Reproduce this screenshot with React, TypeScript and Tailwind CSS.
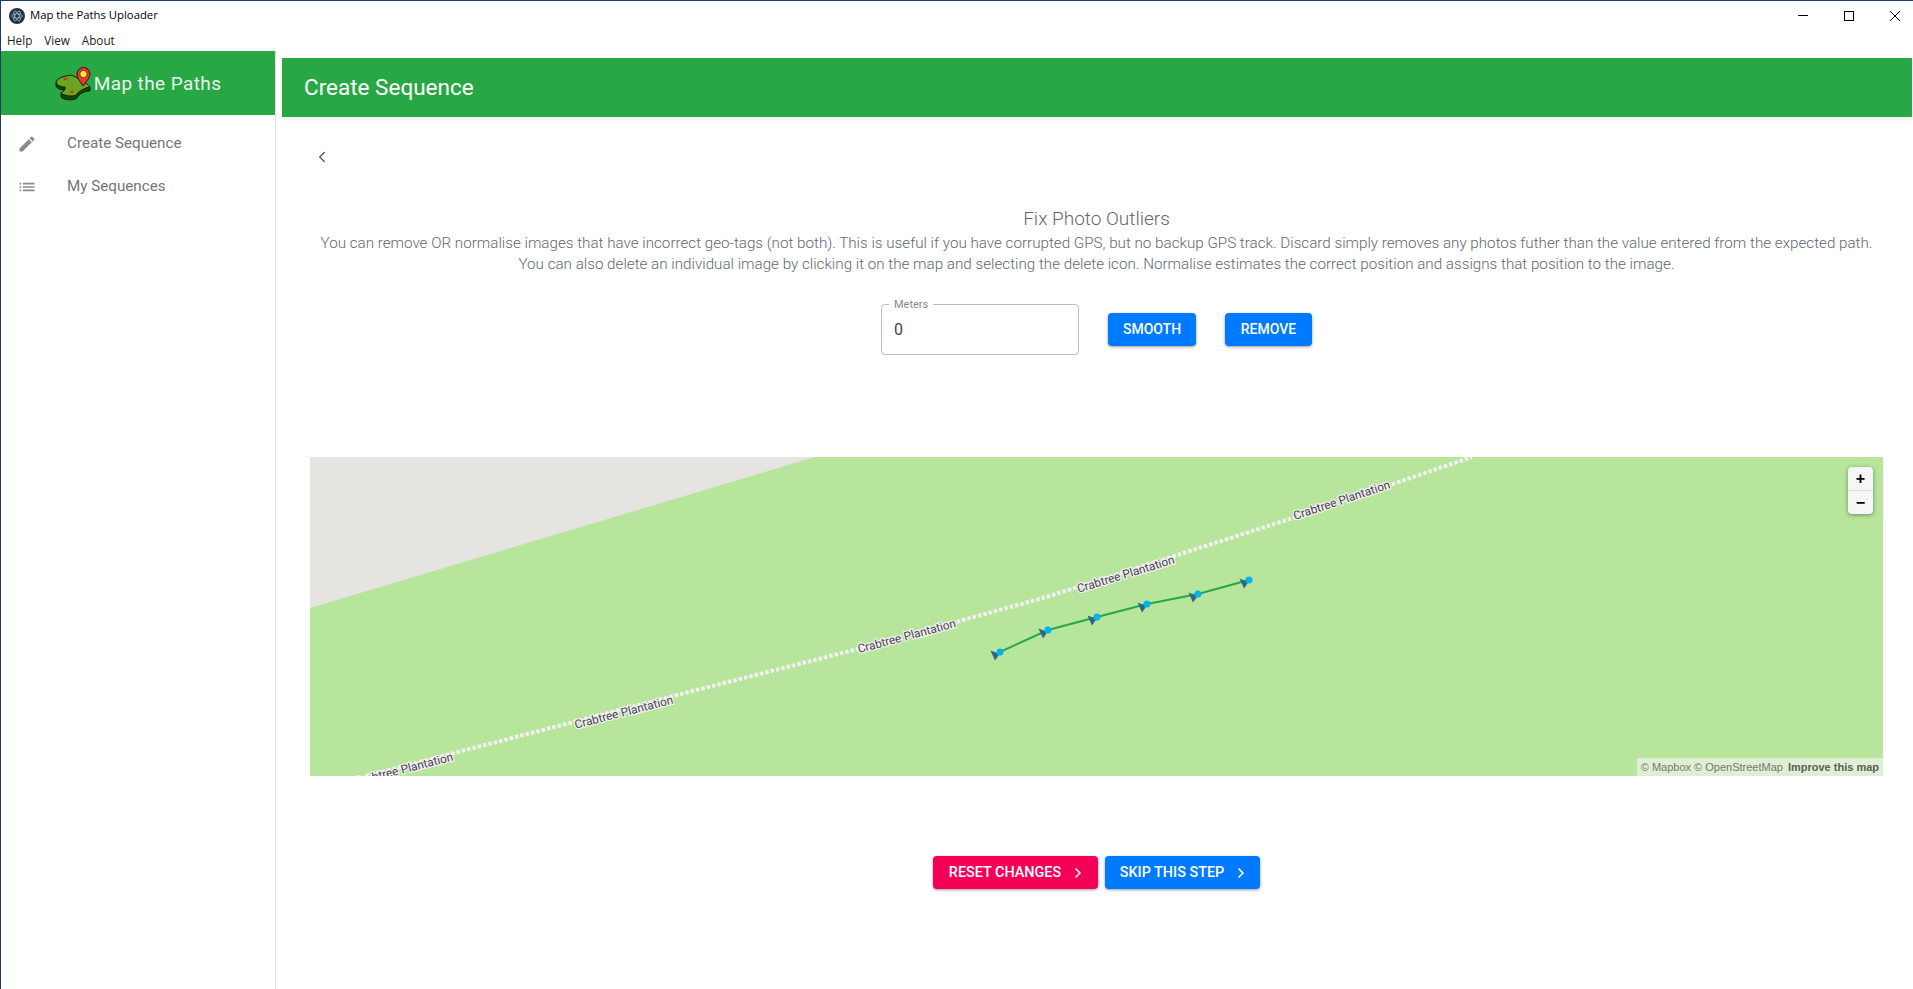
import React from "react";
import { ChevronLeft, ChevronRight } from "lucide-react";

const markers = [
  [995, 655],
  [1043, 633],
  [1092, 620],
  [1142, 607],
  [1193, 597],
  [1244, 583],
];

const labels = [
  { x: 94, y: 313, a: -14.5 },
  { x: 314, y: 256, a: -14.5 },
  { x: 597, y: 180, a: -15 },
  { x: 816, y: 118, a: -17 },
  { x: 1032, y: 44, a: -18.5 },
];

const Logo = () => (
  <svg width="38" height="36" viewBox="0 0 38 36">
    <path d="M1 17 C3 12 11 11 16 10 C21 12 31 18 35 21 L35 25 C29 25 24 28 22 32 C19 35 8 34 6 31 L6 27 C9 26 11 26 10 24 C7 24 2 23 1 20 Z" fill="#0c4a0a" stroke="#0a1f05" strokeWidth="1" />
    <path d="M1 16 C3 11 11 10 16 9 C21 11 31 16 35 21 C29 22 24 25 21 29 C17 31 9 30 6 27 C9 25 11 23 10 21 C7 21 2 20 1 16 Z" fill="#6aa51f" stroke="#0a1f05" strokeWidth="1" />
    <path d="M9 12 L12 14 M12 12 L9 14 M15 25 L18 27 M18 25 L15 27" stroke="#c0392b" strokeWidth="1.2" />
    <path d="M12 14 C17 16 19 20 17 25" stroke="#a56a2a" strokeWidth="0.8" strokeDasharray="1.5 1.5" fill="none" />
    <path d="M28 20 C24 14 22 12 22 8 A6.5 6.5 0 0 1 35 8 C35 12 32 14 28 20 Z" fill="#e53935" stroke="#3a0a0a" strokeWidth="1" />
    <circle cx="28.5" cy="8" r="3.6" fill="#ffeb3b" stroke="#3a0a0a" strokeWidth="0.6" />
  </svg>
);

const AppIcon = () => (
  <svg width="16" height="16" viewBox="0 0 16 16">
    <circle cx="8" cy="8" r="8" fill="#2b2e3b" />
    <g fill="none" stroke="#9feaf9" strokeWidth="0.6">
      <ellipse cx="8" cy="8" rx="5.5" ry="2.2" />
      <ellipse cx="8" cy="8" rx="5.5" ry="2.2" transform="rotate(60 8 8)" />
      <ellipse cx="8" cy="8" rx="5.5" ry="2.2" transform="rotate(120 8 8)" />
    </g>
  </svg>
);

const MapView = () => (
  <div className="relative h-[319px] w-[1573px] overflow-hidden bg-[#b7e59c]">
    <svg width="1573" height="319" viewBox="0 0 1573 319" className="block">
      <polygon points="0,0 505,0 0,151" fill="#e5e4e0" />
      <polyline
        points="56,319 367,238 544,193 733,141 983,61 1162,0"
        fill="none"
        stroke="#f2f0f2"
        strokeWidth="4"
        strokeDasharray="3.5 2"
      />
      {labels.map((l) => (
        <text
          key={l.x}
          x={l.x}
          y={l.y}
          textAnchor="middle"
          dominantBaseline="middle"
          transform={`rotate(${l.a} ${l.x} ${l.y})`}
          fill="#45434a"
          stroke="#f2f0f2"
          strokeWidth="2.5"
          paintOrder="stroke"
          fontFamily="Roboto, sans-serif"
          fontSize="11.8"
        >
          Crabtree Plantation
        </text>
      ))}
      <polyline
        points={markers.map(([x, y]) => `${x - 305},${y - 460}`).join(" ")}
        fill="none"
        stroke="#28a745"
        strokeWidth="2"
      />
      {markers.map(([x, y]) => (
        <g key={x}>
          <polygon points={`${x - 314.5},${y - 461.5} ${x - 305.5},${y - 458} ${x - 310},${y - 451.5}`} fill="#33648f" />
          <circle cx={x - 305} cy={y - 460} r="3.5" fill="#00b4ee" />
        </g>
      ))}
    </svg>
    <div className="absolute right-[10px] top-[10px] flex w-[25px] flex-col rounded bg-[#f5f6f5] text-center font-['Liberation_Sans',sans-serif] text-[16px] font-bold leading-[23px] text-black shadow-[0_1px_4px_rgba(0,0,0,0.4)]">
      <div className="h-6 border-b border-[#ddd]">+</div>
      <div className="h-[23px]">−</div>
    </div>
    <div className="absolute bottom-0 right-0 flex h-[18px] items-center gap-[5px] bg-[#deefd3] pl-1 pr-1 font-['Liberation_Sans',sans-serif] text-[11px] text-[#75796f]">
      <span>© Mapbox © OpenStreetMap</span>
      <span className="font-bold text-[#5b6056]">Improve this map</span>
    </div>
  </div>
);

export default function App() {
  return (
    <div className="flex h-[989px] w-[1913px] flex-col overflow-hidden border-l border-t border-[#1e3a66] bg-white font-['Roboto',sans-serif]">
      {/* window chrome */}
      <div className="flex h-[29px] items-center justify-between">
        <div className="flex items-center gap-[5px] pl-2 font-['Open_Sans',sans-serif] text-[11.3px] text-black">
          <AppIcon />
          <span>Map the Paths Uploader</span>
        </div>
        <div className="flex items-center text-black">
          <div className="flex h-[29px] w-[46px] items-center justify-center">
            <div className="h-px w-[10px] bg-black"></div>
          </div>
          <div className="flex h-[29px] w-[46px] items-center justify-center">
            <div className="h-[10px] w-[10px] border border-black"></div>
          </div>
          <div className="ml-[5px] flex h-[29px] w-[36px] items-center justify-center">
            <svg width="10" height="10" viewBox="0 0 10 10" stroke="black" strokeWidth="1">
              <path d="M0 0 L10 10 M10 0 L0 10" />
            </svg>
          </div>
        </div>
      </div>
      <div className="flex h-[21px] items-center gap-3 pl-[6px] font-['Open_Sans',sans-serif] text-[11.7px] text-[#222]">
        <span>Help</span>
        <span>View</span>
        <span>About</span>
      </div>

      <div className="flex flex-1">
        {/* sidebar */}
        <div className="w-[275px] shrink-0 border-r border-[#e0e0e0]">
          <div className="flex h-[64px] items-center justify-center bg-[#28a745] pt-[2px] text-[19px] tracking-[0.4px] text-[#e9f6ec]">
            <Logo />
            <span className="ml-[1px]">Map the Paths</span>
          </div>
          <div className="pt-[7px] text-[15.2px] text-[#757575]">
            <div className="flex h-[43px] items-center pl-[16px]">
              <svg width="20" height="20" viewBox="0 0 24 24" fill="#8a8a8a">
                <path d="M3 17.25V21h3.75L17.81 9.94l-3.75-3.75L3 17.25zM20.71 7.04a1 1 0 0 0 0-1.41l-2.34-2.34a1 1 0 0 0-1.41 0l-1.83 1.83 3.75 3.75 1.83-1.83z" />
              </svg>
              <span className="ml-[30px]">Create Sequence</span>
            </div>
            <div className="flex h-[43px] items-center pl-[16px]">
              <svg width="20" height="20" viewBox="0 0 24 24" fill="#8a8a8a">
                <path d="M3 13h2v-2H3v2zm0 4h2v-2H3v2zm0-8h2V7H3v2zm4 4h14v-2H7v2zm0 4h14v-2H7v2zM7 7v2h14V7H7z" />
              </svg>
              <span className="ml-[30px]">My Sequences</span>
            </div>
          </div>
        </div>

        {/* main */}
        <div className="min-w-0 flex-1 pl-[6px] pt-[7px]">
          <div className="flex h-[59px] w-[1630px] items-center bg-[#28a745] pl-[22px] text-[22.5px] text-white shadow-[0_2px_4px_rgba(0,0,0,0.08)]">
            Create Sequence
          </div>
          <div className="flex flex-col pl-[28px]">
            <div className="flex h-[78px] items-center pl-[3px] pt-[1px]">
              <ChevronLeft size={18} strokeWidth={1.75} className="text-[#555]" />
            </div>
            <div className="w-[1573px] pt-[12px] text-center font-light text-[#5f6972]">
              <h3 className="text-[19px] leading-[24px]">Fix Photo Outliers</h3>
              <p className="mt-[2px] whitespace-nowrap text-[15.2px] leading-[21px]">
                You can remove OR normalise images that have incorrect geo-tags (not both). This is useful if you have corrupted GPS, but no backup GPS track. Discard simply removes any photos futher than the value entered from the expected path.
                <br />
                You can also delete an individual image by clicking it on the map and selecting the delete icon. Normalise estimates the correct position and assigns that position to the image.
              </p>
            </div>
            <div className="flex w-[1573px] items-center justify-center pt-[29px]">
              <div className="relative flex h-[51px] w-[198px] items-center rounded border border-[#bdbdbd] pl-[12px] text-[16px] text-[#444]">
                <span className="absolute -top-[6px] left-[7px] bg-white px-[5px] text-[11px] leading-[12px] text-[#8a8a8a]">Meters</span>
                0
              </div>
              <button className="ml-[29px] h-[33px] w-[88px] rounded bg-[#007bff] text-[14px] font-medium text-white shadow-[0_1px_3px_rgba(0,0,0,0.4)]">SMOOTH</button>
              <button className="ml-[29px] h-[33px] w-[87px] rounded bg-[#007bff] text-[14px] font-medium text-white shadow-[0_1px_3px_rgba(0,0,0,0.4)]">REMOVE</button>
            </div>
            <div className="pt-[102px]">
              <MapView />
            </div>
            <div className="flex w-[1573px] justify-center gap-[7px] pt-[80px]">
              <button className="flex h-[33px] w-[165px] items-center justify-center gap-[9px] rounded bg-[#f50057] pl-[4px] text-[14.4px] font-medium text-white shadow-[0_1px_3px_rgba(0,0,0,0.4)]">
                RESET CHANGES <ChevronRight size={16} strokeWidth={2.5} />
              </button>
              <button className="flex h-[33px] w-[155px] items-center justify-center gap-[9px] rounded bg-[#007bff] pl-[4px] text-[14.4px] font-medium text-white shadow-[0_1px_3px_rgba(0,0,0,0.4)]">
                SKIP THIS STEP <ChevronRight size={16} strokeWidth={2.5} />
              </button>
            </div>
          </div>
        </div>
      </div>
    </div>
  );
}
